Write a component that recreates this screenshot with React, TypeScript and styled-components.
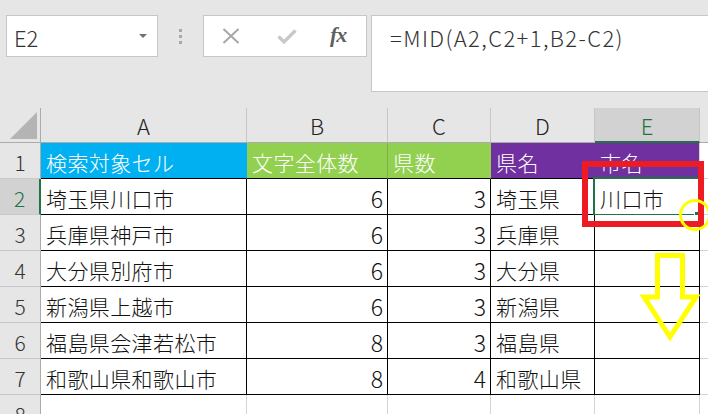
import React from "react";
import styled, { createGlobalStyle, css } from "styled-components";

const GlobalStyle = createGlobalStyle`
  html, body { margin: 0; padding: 0; background: #ffffff; overflow: hidden; }
  body { font-family: "Noto Sans CJK JP", "Noto Sans", sans-serif; font-weight: 300; }
  * { box-sizing: border-box; }
`;

const Page = styled.div`
  position: relative;
  width: 708px;
  height: 414px;
  overflow: hidden;
  background: #ffffff;
`;

const Toolbar = styled.div`
  height: 108px;
  background: #e6e6e6;
  display: flex;
  align-items: flex-start;
  padding: 15px 0 0 6px;
`;

const NameBox = styled.div`
  width: 152px;
  height: 42px;
  background: #ffffff;
  border: 1px solid #c6c6c6;
  display: flex;
  align-items: center;
  justify-content: space-between;
  padding: 1px 10px 0 7px;
  font-size: 22px;
  color: #333333;
`;

const DropArrow = styled.span`
  width: 0;
  height: 0;
  border-left: 4px solid transparent;
  border-right: 4px solid transparent;
  border-top: 4px solid #707070;
  margin-top: -2px;
`;

const Grip = styled.div`
  width: 45px;
  height: 42px;
  display: flex;
  flex-direction: column;
  align-items: center;
  justify-content: center;
  gap: 3px;
  span {
    width: 3px;
    height: 3px;
    background: #a8a8a8;
    display: block;
  }
`;

const ButtonsBox = styled.div`
  width: 164px;
  height: 42px;
  background: #ffffff;
  border: 1px solid #c6c6c6;
  display: flex;
  align-items: center;
  padding-left: 18px;
`;

const IconSlot = styled.div<{ $w: number }>`
  width: ${(p) => p.$w}px;
  height: 40px;
  display: flex;
  align-items: center;
`;

const Fx = styled.span`
  font-family: "Liberation Serif", "DejaVu Serif", serif;
  font-style: italic;
  font-weight: bold;
  font-size: 22px;
  color: #5f5f5f;
  letter-spacing: -1px;
  margin-top: -3px;
`;

const FormulaBox = styled.div`
  flex: 1;
  height: 77px;
  margin-left: 4px;
  background: #ffffff;
  border: 1px solid #c6c6c6;
  border-right: none;
  padding: 5px 0 0 18px;
  font-size: 22px;
  letter-spacing: 1.4px;
  color: #333333;
  white-space: nowrap;
`;

const Sheet = styled.div`
  display: grid;
  grid-template-columns: 41px 206px 141px 103px 104px 105px 1fr;
  grid-template-rows: 35px repeat(8, 36px);
`;

const Corner = styled.div`
  background: #e6e6e6;
  border-right: 1px solid #ababab;
  border-bottom: 1px solid #ababab;
  position: relative;
  &::after {
    content: "";
    position: absolute;
    right: 3px;
    bottom: 3px;
    width: 0;
    height: 0;
    border-left: 27px solid transparent;
    border-bottom: 27px solid #b4b4b4;
  }
`;

const ColHead = styled.div<{ $active?: boolean }>`
  background: ${(p) => (p.$active ? "#d2d2d2" : "#e6e6e6")};
  border-right: 1px solid #c6c6c6;
  border-bottom: ${(p) => (p.$active ? "2px solid #217346" : "1px solid #ababab")};
  display: flex;
  align-items: center;
  justify-content: center;
  padding-top: ${(p) => (p.$active ? "1px" : "0")};
  font-size: 22px;
  color: ${(p) => (p.$active ? "#217346" : "#222222")};
`;

const RowHead = styled.div<{ $active?: boolean }>`
  background: ${(p) => (p.$active ? "#d2d2d2" : "#e6e6e6")};
  border-right: ${(p) => (p.$active ? "2px solid #217346" : "1px solid #ababab")};
  border-bottom: 1px solid #c8c8c8;
  display: flex;
  align-items: center;
  justify-content: center;
  padding-top: 2px;
  font-size: 21px;
  color: ${(p) => (p.$active ? "#217346" : "#333333")};
`;

const Cell = styled.div<{
  $fill?: string;
  $right?: boolean;
  $white?: boolean;
  $rb: string;
  $bb: string;
}>`
  position: relative;
  background: ${(p) => p.$fill || "#ffffff"};
  border-right: 1px solid ${(p) => p.$rb};
  border-bottom: 1px solid ${(p) => p.$bb};
  display: flex;
  align-items: center;
  justify-content: ${(p) => (p.$right ? "flex-end" : "flex-start")};
  padding: 2px 4px 0 5px;
  font-size: 21px;
  letter-spacing: 0.4px;
  white-space: nowrap;
  color: ${(p) => (p.$white ? "#ffffff" : "#111111")};
  ${(p) =>
    p.$right &&
    css`
      font-size: 23px;
      letter-spacing: 0;
    `}
`;

const Selection = styled.div`
  position: absolute;
  left: -2px;
  top: -2px;
  right: -1px;
  bottom: -2px;
  border: 2px solid #217346;
  pointer-events: none;
`;

const FillHandle = styled.div`
  position: absolute;
  right: -3px;
  bottom: -4px;
  width: 7px;
  height: 7px;
  background: #217346;
  border: 1px solid #ffffff;
`;

const RedBox = styled.div`
  position: absolute;
  left: 582px;
  top: 161px;
  width: 122px;
  height: 66px;
  border: 6px solid #ed1c24;
`;

const YellowRing = styled.div`
  position: absolute;
  left: 679px;
  top: 199px;
  width: 32px;
  height: 32px;
  border-radius: 50%;
  border: 3px solid #ffff00;
`;

const ArrowSvg = styled.svg`
  position: absolute;
  left: 0;
  top: 0;
  pointer-events: none;
`;

const COLS = ["A", "B", "C", "D", "E"];

type Row = { a: string; b: string; c: string; d: string; e: string };

const rows: Row[] = [
  { a: "埼玉県川口市", b: "6", c: "3", d: "埼玉県", e: "川口市" },
  { a: "兵庫県神戸市", b: "6", c: "3", d: "兵庫県", e: "" },
  { a: "大分県別府市", b: "6", c: "3", d: "大分県", e: "" },
  { a: "新潟県上越市", b: "6", c: "3", d: "新潟県", e: "" },
  { a: "福島県会津若松市", b: "8", c: "3", d: "福島県", e: "" },
  { a: "和歌山県和歌山市", b: "8", c: "4", d: "和歌山県", e: "" },
];

const CYAN = "#00b0f0";
const GREEN = "#92d050";
const PURPLE = "#7030a0";
const BLACK = "#000000";
const GRID = "#d4d4d4";

export default function App() {
  return (
    <Page>
      <GlobalStyle />
      <Toolbar>
        <NameBox>
          <span>E2</span>
          <DropArrow />
        </NameBox>
        <Grip>
          <span />
          <span />
          <span />
        </Grip>
        <ButtonsBox>
          <IconSlot $w={55}>
            <svg width="18" height="16" viewBox="0 0 18 16">
              <path d="M1.5 1 L16.5 15 M16.5 1 L1.5 15" stroke="#a8a8a8" strokeWidth="2" fill="none" />
            </svg>
          </IconSlot>
          <IconSlot $w={53}>
            <svg width="20" height="15" viewBox="0 0 20 15">
              <path d="M1.5 7.5 L7 13 L18.5 1.5" stroke="#c8c8c8" strokeWidth="3.2" fill="none" />
            </svg>
          </IconSlot>
          <IconSlot $w={30}>
            <Fx>fx</Fx>
          </IconSlot>
        </ButtonsBox>
        <FormulaBox>=MID(A2,C2+1,B2-C2)</FormulaBox>
      </Toolbar>

      <Sheet>
        <Corner />
        {COLS.map((c) => (
          <ColHead key={c} $active={c === "E"}>
            {c}
          </ColHead>
        ))}
        <ColHead />

        <RowHead>1</RowHead>
        <Cell $fill={CYAN} $white $rb={CYAN} $bb={BLACK}>検索対象セル</Cell>
        <Cell $fill={GREEN} $white $rb="#7fb048" $bb={BLACK}>文字全体数</Cell>
        <Cell $fill={GREEN} $white $rb={GREEN} $bb={BLACK}>県数</Cell>
        <Cell $fill={PURPLE} $white $rb={PURPLE} $bb={BLACK}>県名</Cell>
        <Cell $fill={PURPLE} $white $rb={GRID} $bb={BLACK}>市名</Cell>
        <Cell $rb="transparent" $bb={GRID} />

        {rows.map((r, i) => (
          <React.Fragment key={i}>
            <RowHead $active={i === 0}>{i + 2}</RowHead>
            <Cell $rb={BLACK} $bb={BLACK}>{r.a}</Cell>
            <Cell $right $rb={BLACK} $bb={BLACK}>{r.b}</Cell>
            <Cell $right $rb={BLACK} $bb={BLACK}>{r.c}</Cell>
            <Cell $rb={BLACK} $bb={BLACK}>{r.d}</Cell>
            <Cell $rb={BLACK} $bb={BLACK}>
              {r.e}
              {i === 0 && (
                <Selection>
                  <FillHandle />
                </Selection>
              )}
            </Cell>
            <Cell $rb="transparent" $bb={GRID} />
          </React.Fragment>
        ))}

        <RowHead>8</RowHead>
        {COLS.map((c) => (
          <Cell key={c} $rb={GRID} $bb={GRID} />
        ))}
        <Cell $rb="transparent" $bb={GRID} />
      </Sheet>

      <RedBox />
      <YellowRing />
      <ArrowSvg width="708" height="414" viewBox="0 0 708 414">
        <polygon
          points="657.5,255.5 682.5,255.5 682.5,297 696,297 670,337 644,297 657.5,297"
          fill="none"
          stroke="#ffff00"
          strokeWidth="5"
          strokeLinejoin="miter"
        />
      </ArrowSvg>
    </Page>
  );
}
